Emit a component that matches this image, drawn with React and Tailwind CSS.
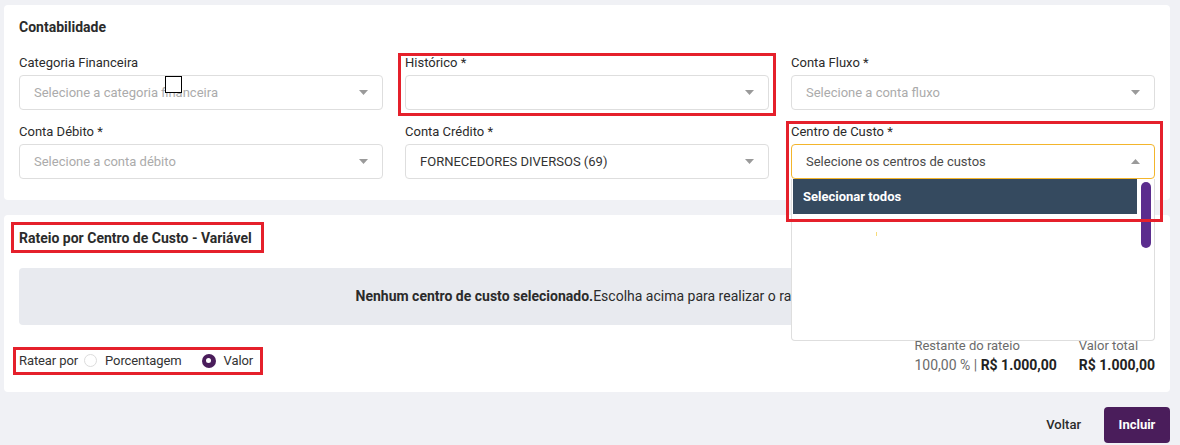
import React from 'react';

const Caret = ({ up }) => (
  <svg width="9" height="5" viewBox="0 0 9 5" className="shrink-0">
    {up ? <path d="M0 5 L4.5 0 L9 5 Z" fill="#9a9a9a" /> : <path d="M0 0 L9 0 L4.5 5 Z" fill="#9a9a9a" />}
  </svg>
);

const Field = ({ label, placeholder, value, focused, children }) => (
  <div className="relative flex flex-col">
    <label className="text-[13px] leading-5 text-[#2b2b2b] h-5">{label}</label>
    <div
      className={`mt-[2px] h-[35px] rounded-[4px] border bg-white flex items-center justify-between pl-[14px] pr-[14px] ${
        focused ? 'border-[#f3b52c]' : 'border-[#dedede]'
      }`}
    >
      {value ? (
        <span className="text-[13px] text-[#333]">{value}</span>
      ) : (
        <span className={`text-[13px] ${focused ? 'text-[#4a4a4a]' : 'text-[#ababab]'}`}>{placeholder}</span>
      )}
      <Caret up={focused} />
    </div>
    {children}
  </div>
);

const Radio = ({ checked, label }) => (
  <label className="flex items-center gap-[8px]">
    {checked ? (
      <span className="w-[14px] h-[14px] rounded-full bg-[#4a1d5b] flex items-center justify-center">
        <span className="w-[5px] h-[5px] rounded-full bg-white" />
      </span>
    ) : (
      <span className="w-[13px] h-[13px] rounded-full border border-[#dcdcdc] bg-white" />
    )}
    <span className="text-[13px] text-[#333] tracking-[-0.1px]">{label}</span>
  </label>
);

export default function App() {
  return (
    <div
      className="relative w-[1180px] h-[445px] overflow-hidden bg-[#f0f1f5] pt-[5px] pl-[4px] pr-[10px]"
      style={{ fontFamily: 'Roboto, "Liberation Sans", sans-serif' }}
    >
      {/* Contabilidade */}
      <div className="bg-white rounded-[4px] h-[195px] px-[15px] pt-[12px]">
        <h3 className="text-[14px] leading-5 font-bold text-[#2b2b2b]">Contabilidade</h3>
        <div className="grid grid-cols-3 gap-x-[22px] gap-y-[12px] mt-[16px]">
          <Field label="Categoria Financeira" placeholder="Selecione a categoria financeira" />
          <Field label="Histórico *" />
          <Field label="Conta Fluxo *" placeholder="Selecione a conta fluxo" />
          <Field label="Conta Débito *" placeholder="Selecione a conta débito" />
          <Field label="Conta Crédito *" value="FORNECEDORES DIVERSOS (69)" />
          <Field label="Centro de Custo *" placeholder="Selecione os centros de custos" focused>
            <div className="absolute left-0 right-0 top-full z-10 h-[162px] bg-white border border-t-0 border-[#dedede] rounded-b-[4px] flex pl-px pr-[3px]">
              <div className="flex-1">
                <div className="h-[35px] bg-[#354a5f] flex items-center pl-[10px] text-[13px] font-bold text-white">
                  Selecionar todos
                </div>
                <div className="ml-[83px] mt-[18px] w-px h-[4px] bg-[#f7dc7a]" />
              </div>
              <div className="w-[10px] ml-[4px] mt-[3px] h-[66px] rounded-full bg-[#5b2d8e]" />
            </div>
          </Field>
        </div>
      </div>

      {/* Rateio */}
      <div className="bg-white rounded-[4px] mt-[15px] h-[177px] px-[15px] pt-[13px]">
        <h3 className="text-[14px] leading-5 font-bold text-[#2b2b2b]">Rateio por Centro de Custo - Variável</h3>
        <div className="mt-[20px] h-[57px] rounded-[4px] bg-[#e8eaef] flex items-center justify-center text-[14px] text-[#2b2b2b]">
          <span className="font-bold">Nenhum centro de custo selecionado.</span>
          <span>Escolha acima para realizar o rateio.</span>
        </div>
        <div className="flex items-start justify-between mt-[12px]">
          <div className="flex items-center gap-[6px] mt-[14px]">
            <span className="text-[13px] text-[#333] tracking-[-0.1px]">Ratear por</span>
            <Radio label="Porcentagem" />
            <span className="w-[8px]" />
            <Radio checked label="Valor" />
          </div>
          <div className="flex gap-[22px]">
            <div className="flex flex-col">
              <span className="text-[13px] leading-[18px] text-[#6b6b6b]">Restante do rateio</span>
              <span className="text-[14px] leading-[20px] text-[#6b6b6b]">
                100,00 % | <span className="font-bold text-[#222]">R$ 1.000,00</span>
              </span>
            </div>
            <div className="flex flex-col">
              <span className="text-[13px] leading-[18px] text-[#6b6b6b]">Valor total</span>
              <span className="text-[14px] leading-[20px] font-bold text-[#222]">R$ 1.000,00</span>
            </div>
          </div>
        </div>
      </div>

      {/* Footer */}
      <div className="flex justify-end items-center gap-[23px] mt-[15px]">
        <button className="text-[13px] font-medium text-[#2b2b2b]">Voltar</button>
        <button className="h-[36px] w-[66px] rounded-[4px] bg-[#4a1d5b] text-white text-[13px] font-bold">Incluir</button>
      </div>

      {/* annotation boxes */}
      <div className="absolute left-[398px] top-[53px] w-[378px] h-[63px] border-[3px] border-[#e5202b] pointer-events-none" />
      <div className="absolute left-[786px] top-[121px] w-[377px] h-[101px] border-[3px] border-[#e5202b] z-20 pointer-events-none" />
      <div className="absolute left-[11px] top-[222px] w-[253px] h-[31px] border-[3px] border-[#e5202b] pointer-events-none" />
      <div className="absolute left-[13px] top-[347px] w-[250px] h-[28px] border-[3px] border-[#e5202b] pointer-events-none" />
      <div className="absolute left-[165px] top-[76px] w-[17px] h-[17px] border border-black bg-white" />
    </div>
  );
}
